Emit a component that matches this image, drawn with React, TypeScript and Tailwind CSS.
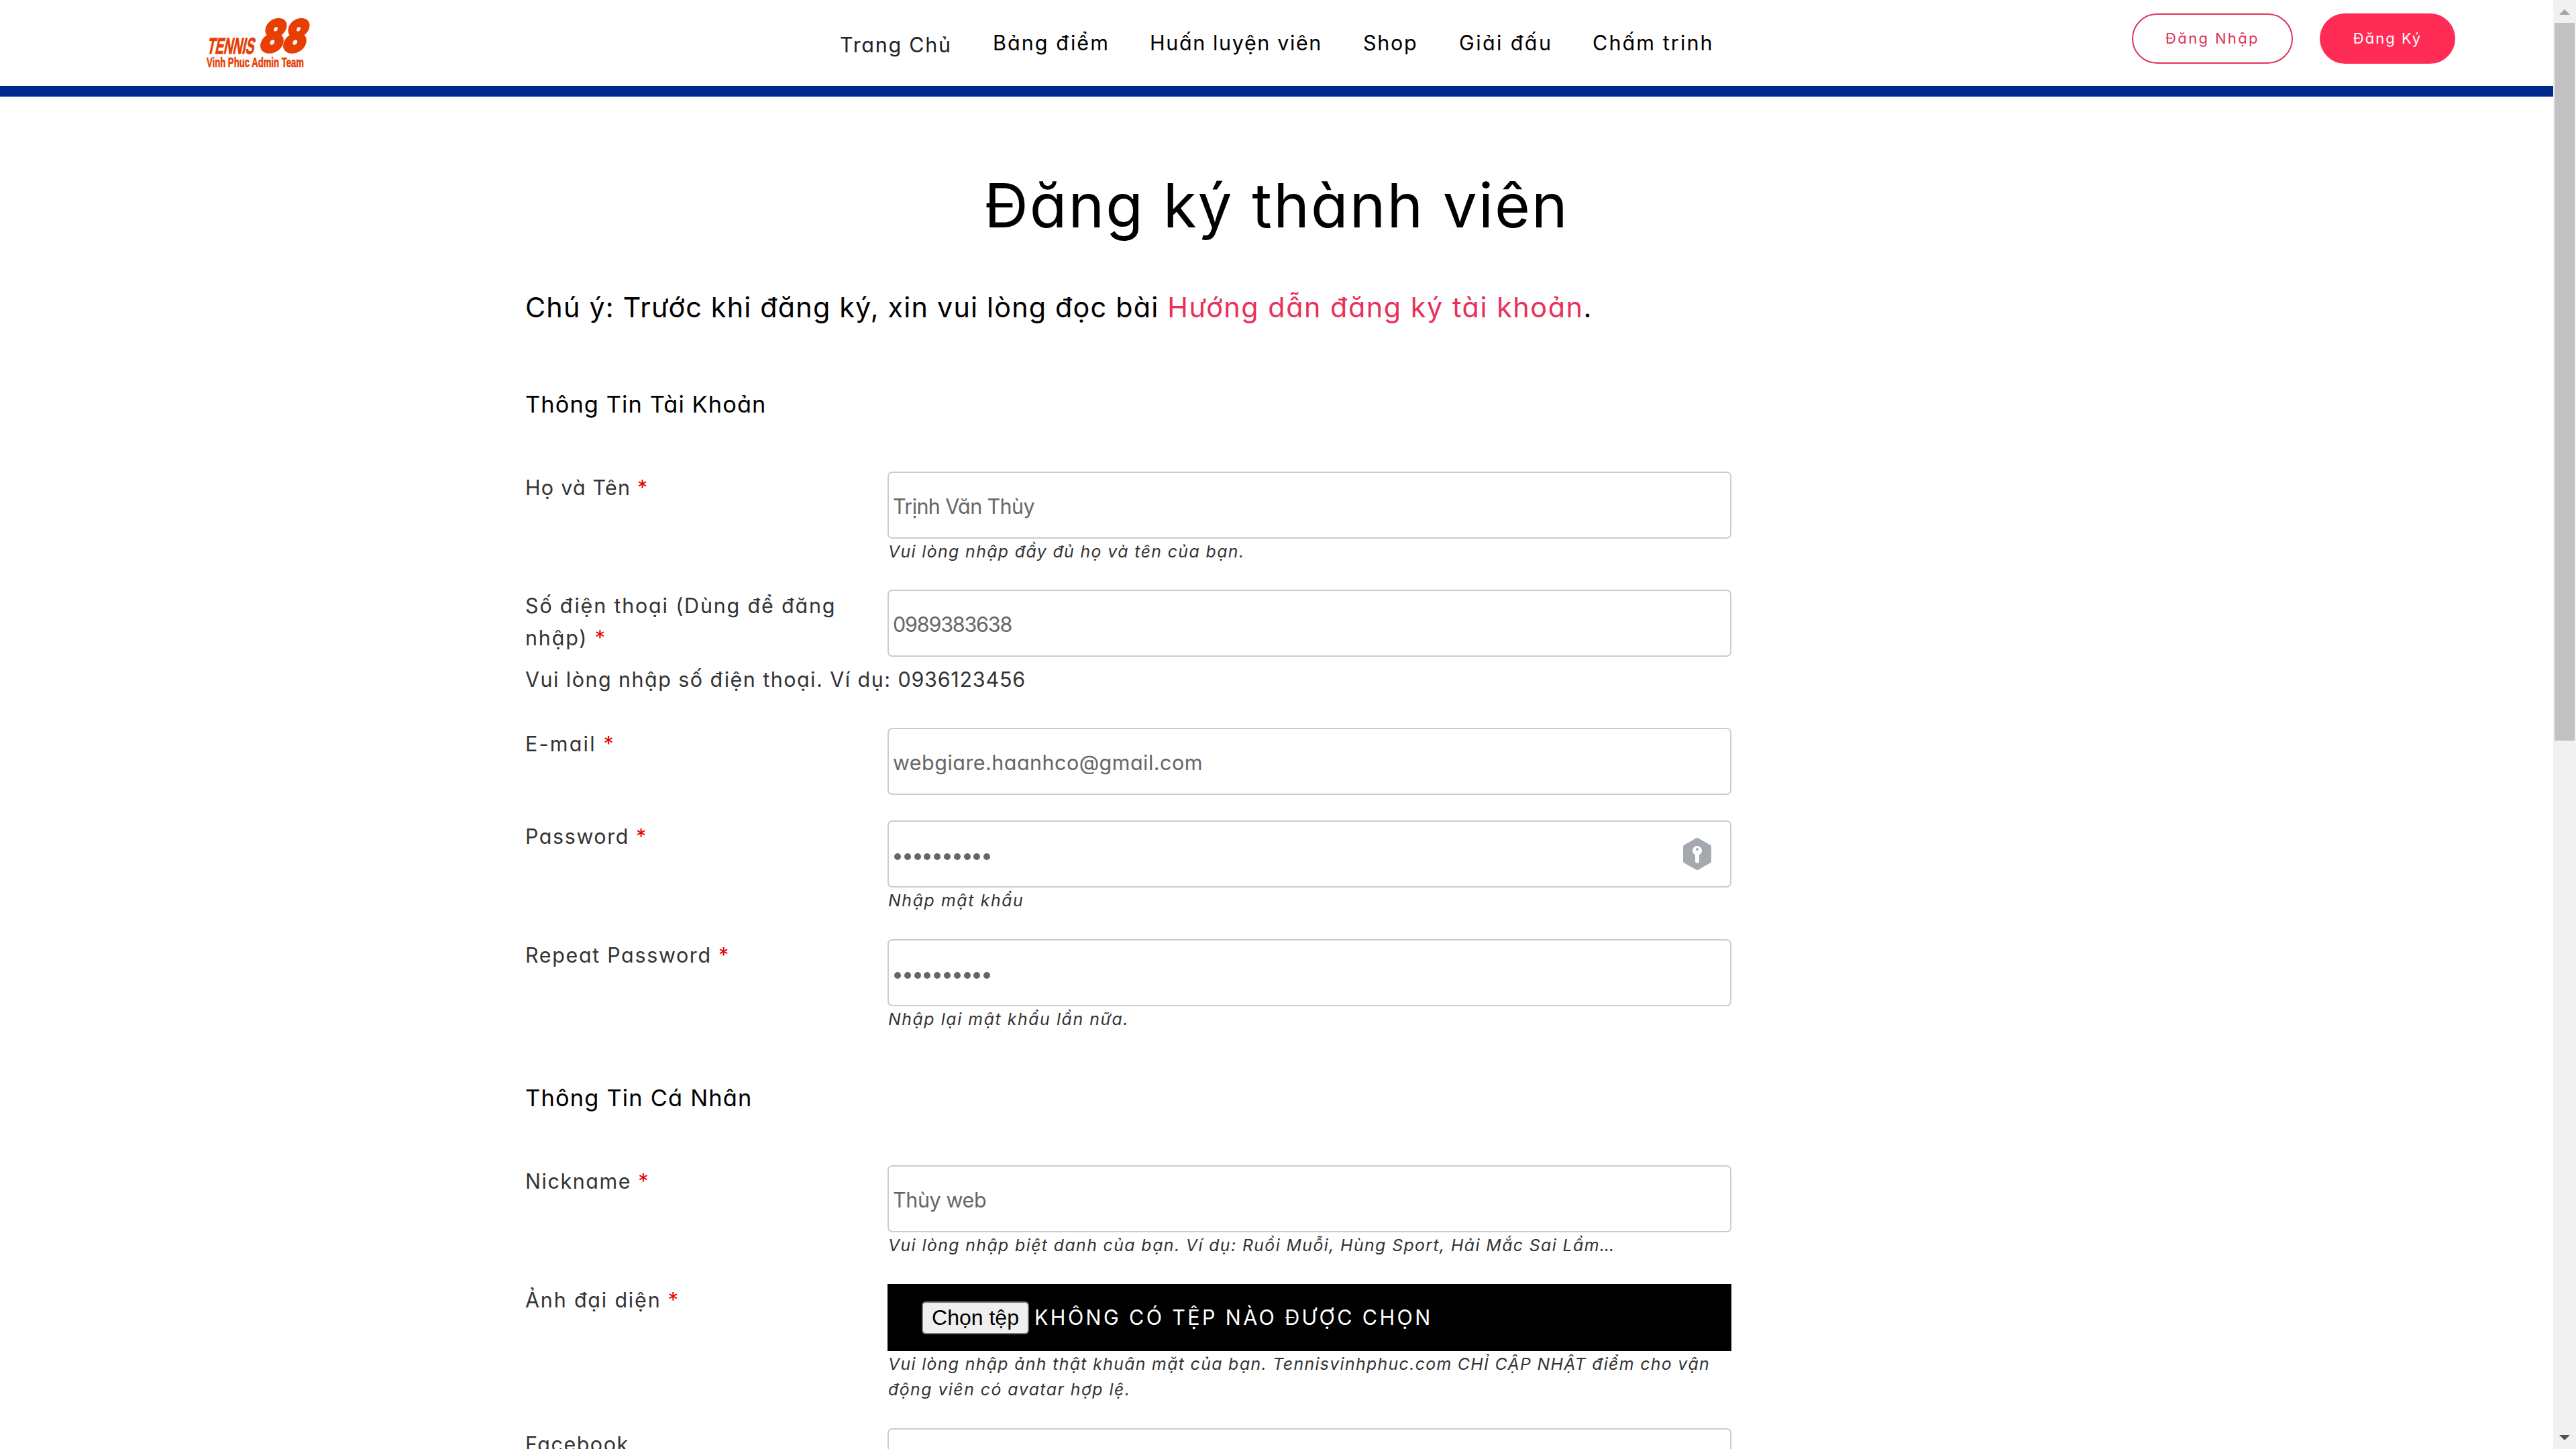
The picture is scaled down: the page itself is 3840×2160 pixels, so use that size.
import React from "react";

const navItems = [
  { label: "Trang Chủ", className: "w-[228px] tracking-[1.71px] text-[#222] pt-[3px]" },
  { label: "Bảng điểm", className: "w-[234px] tracking-[2.05px]" },
  { label: "Huấn luyện viên", className: "w-[318px] tracking-[1.62px]" },
  { label: "Shop", className: "w-[143px] tracking-[1.69px]" },
  { label: "Giải đấu", className: "w-[199px] tracking-[2.4px]" },
  { label: "Chấm trinh", className: "w-[180px] tracking-[2.1px]" },
];

const Logo = () => (
  <svg className="ml-[300px] h-[128px] w-[170px] overflow-visible" viewBox="300 0 170 128" fill="#e83e04">
    <g fontFamily="'Liberation Sans Narrow', 'Liberation Sans', Arial, sans-serif" fontWeight="700">
      <text
        transform="translate(308 79.5) skewX(-12)"
        fontSize="33.5"
        textLength="70"
        lengthAdjust="spacingAndGlyphs"
        stroke="#e83e04"
        strokeWidth="1"
      >
        TENNIS
      </text>
      <text
        x="308"
        y="99.5"
        fontSize="20.5"
        textLength="145"
        lengthAdjust="spacingAndGlyphs"
        stroke="#e83e04"
        strokeWidth="0.6"
      >
        Vinh Phuc Admin Team
      </text>
    </g>
    <text
      transform="translate(385 76.5) skewX(-15)"
      fontFamily="Inter, sans-serif"
      fontWeight="900"
      fontSize="65"
      textLength="68"
      lengthAdjust="spacingAndGlyphs"
      stroke="#e83e04"
      strokeWidth="4"
      strokeLinejoin="round"
    >
      88
    </text>
  </svg>
);

const Header = () => (
  <header className="flex h-[144px] w-full items-center border-b-[16px] border-[#00298f]">
    <Logo />
    <nav className="ml-[782px] flex h-12 text-[30.5px] leading-[48px] whitespace-nowrap text-black">
      {navItems.map((item) => (
        <a key={item.label} className={item.className}>
          {item.label}
        </a>
      ))}
    </nav>
    <div className="ml-[624px] flex gap-10 self-start pt-5 text-[22px]">
      <button className="h-[75px] w-[240px] rounded-full border-2 border-[#dc3558] tracking-[2.36px] text-[#dc3558]">
        Đăng Nhập
      </button>
      <button className="h-[75px] w-[202px] rounded-full bg-[#ff2d55] tracking-[2.01px] text-white">
        Đăng Ký
      </button>
    </div>
  </header>
);

type FieldProps = {
  label: React.ReactNode;
  className: string;
  labelClass: string;
  hint?: React.ReactNode;
  hintClass?: string;
  required?: boolean;
  children?: React.ReactNode;
};

const Field = ({ label, className, labelClass, hint, hintClass, required = true, children }: FieldProps) => (
  <div className={`flex ${className}`}>
    <label className={`w-[540px] shrink-0 text-[30.5px] leading-[48px] ${labelClass}`}>
      {label}
      {required && <span className="text-[#e60000]"> *</span>}
    </label>
    <div className="w-[1258px]">
      {children}
      {hint && <p className={`pl-px whitespace-nowrap text-[24.8px] leading-[38px] italic ${hintClass}`}>{hint}</p>}
    </div>
  </div>
);

const InputBox = ({ className = "", children }: { className?: string; children?: React.ReactNode }) => (
  <div
    className={`flex h-[100px] items-center rounded-[7px] border-2 border-[#ccc] pt-[3px] pl-[6px] text-[30.5px] text-[#666] ${className}`}
  >
    {children}
  </div>
);

const Dots = () => (
  <div className="ml-[2px] flex gap-[4.8px] pt-[5px]">
    {Array.from({ length: 10 }, (_, i) => (
      <span key={i} className="size-[10px] rounded-full bg-[#666]" />
    ))}
  </div>
);

// password manager badge
const KeyIcon = () => (
  <svg className="mr-[28px] mb-[4px] ml-auto h-[48px] w-[42px]" viewBox="0 0 42 48">
    <path
      d="M21 2.5 39.5 13V35L21 45.5 2.5 35V13Z"
      fill="#a4a9af"
      stroke="#a4a9af"
      strokeWidth="5"
      strokeLinejoin="round"
    />
    <circle cx="21" cy="19" r="7" fill="#fff" />
    <path d="M21 22V34.5" stroke="#fff" strokeWidth="6" strokeLinecap="round" />
    <circle cx="21" cy="17" r="2" fill="#a4a9af" />
  </svg>
);

const Scrollbar = () => (
  <div className="flex h-full w-[34px] flex-col items-center bg-[#f1f1f1]">
    <svg className="mt-[14px] h-[8px] w-[16px]" viewBox="0 0 16 8">
      <path d="M8 0 16 8H0Z" fill="#a3a3a3" />
    </svg>
    <div className="mt-[12px] h-[1070px] w-[30px] bg-[#c1c1c1]" />
    <svg className="mt-auto mb-[13px] h-[8px] w-[16px]" viewBox="0 0 16 8">
      <path d="M0 0H16L8 8Z" fill="#505050" />
    </svg>
  </div>
);

export default function App() {
  return (
    <div className="flex h-[2160px] w-[3840px] overflow-hidden bg-white font-[Inter,sans-serif] [font-feature-settings:'cv11']">
      <div className="h-full w-[3806px] overflow-hidden">
        <Header />
        <h1 className="mt-[102px] text-center text-[90.8px] leading-[120px] tracking-[2.1px] text-black">
          Đăng ký thành viên
        </h1>
        <main className="ml-[783px] w-[1798px] text-[#333]">
          <p className="mt-[62px] text-[41.3px] leading-[60px] tracking-[1.2px] whitespace-nowrap text-black">
            Chú ý: Trước khi đăng ký, xin vui lòng đọc bài{" "}
            <a className="tracking-[1.55px] text-[#e8305a]">Hướng dẫn đăng ký tài khoản</a>.
          </p>

          <h2 className="mt-[91px] text-[34.4px] leading-[48px] tracking-[1.09px] text-black">Thông Tin Tài Khoản</h2>
          <Field
            label="Họ và Tên"
            className="mt-[76px]"
            labelClass="tracking-[1.2px]"
            hint="Vui lòng nhập đầy đủ họ và tên của bạn."
            hintClass="tracking-[1.4px]"
          >
            <InputBox className="tracking-[-0.62px]">Trịnh Văn Thùy</InputBox>
          </Field>
          <Field
            label={
              <>
                Số điện thoại (Dùng để đăng
                <br />
                nhập)
              </>
            }
            className="mt-[38px]"
            labelClass="tracking-[1.81px]"
          >
            <InputBox className="tracking-[-1.2px]">0989383638</InputBox>
          </Field>
          <p className="mt-[10px] text-[30.5px] leading-[48px] tracking-[1.45px]">
            Vui lòng nhập số điện thoại. Ví dụ: <span className="tracking-[0.75px]">0936123456</span>
          </p>
          <Field label="E-mail" className="mt-[48px]" labelClass="tracking-[2.2px]">
            <InputBox className="tracking-[0.46px]">webgiare.haanhco@gmail.com</InputBox>
          </Field>
          <Field
            label="Password"
            className="mt-[38px]"
            labelClass="tracking-[1.55px]"
            hint="Nhập mật khẩu"
            hintClass="tracking-[1.65px]"
          >
            <InputBox>
              <Dots />
              <KeyIcon />
            </InputBox>
          </Field>
          <Field
            label="Repeat Password"
            className="mt-[39px]"
            labelClass="tracking-[1.64px]"
            hint="Nhập lại mật khẩu lần nữa."
            hintClass="tracking-[1.6px]"
          >
            <InputBox>
              <Dots />
            </InputBox>
          </Field>

          <h2 className="mt-[75px] text-[34.4px] leading-[48px] tracking-[1.2px] text-black">Thông Tin Cá Nhân</h2>
          <Field
            label="Nickname"
            className="mt-[76px]"
            labelClass="tracking-[1.55px]"
            hint="Vui lòng nhập biệt danh của bạn. Ví dụ: Ruồi Muỗi, Hùng Sport, Hải Mắc Sai Lầm…"
            hintClass="tracking-[1.42px]"
          >
            <InputBox className="tracking-[-0.39px]">Thùy web</InputBox>
          </Field>
          <Field
            label="Ảnh đại diện"
            className="mt-[39px]"
            labelClass="tracking-[1.8px]"
            hint={
              <>
                Vui lòng nhập ảnh thật khuân mặt của bạn. Tennisvinhphuc.com CHỈ CẬP NHẬT điểm cho vận
                <br />
                <span className="tracking-[1.5px]">động viên có avatar hợp lệ.</span>
              </>
            }
            hintClass="tracking-[1.36px]"
          >
            <div className="flex h-[100px] items-center bg-black pl-[51px] text-[30.5px] text-white">
              <button className="h-[49px] w-[160px] rounded-[6px] border-2 border-[#767676] bg-[#efefef] font-['Liberation_Sans',Arial,sans-serif] text-[32px] leading-none whitespace-nowrap text-black">
                Chọn tệp
              </button>
              <span className="ml-[8px] tracking-[3.37px]">KHÔNG CÓ TỆP NÀO ĐƯỢC CHỌN</span>
            </div>
          </Field>
          <Field label="Facebook" className="mt-[39px]" labelClass="tracking-[1.5px]" required={false}>
            <InputBox />
          </Field>
        </main>
      </div>
      <Scrollbar />
    </div>
  );
}
